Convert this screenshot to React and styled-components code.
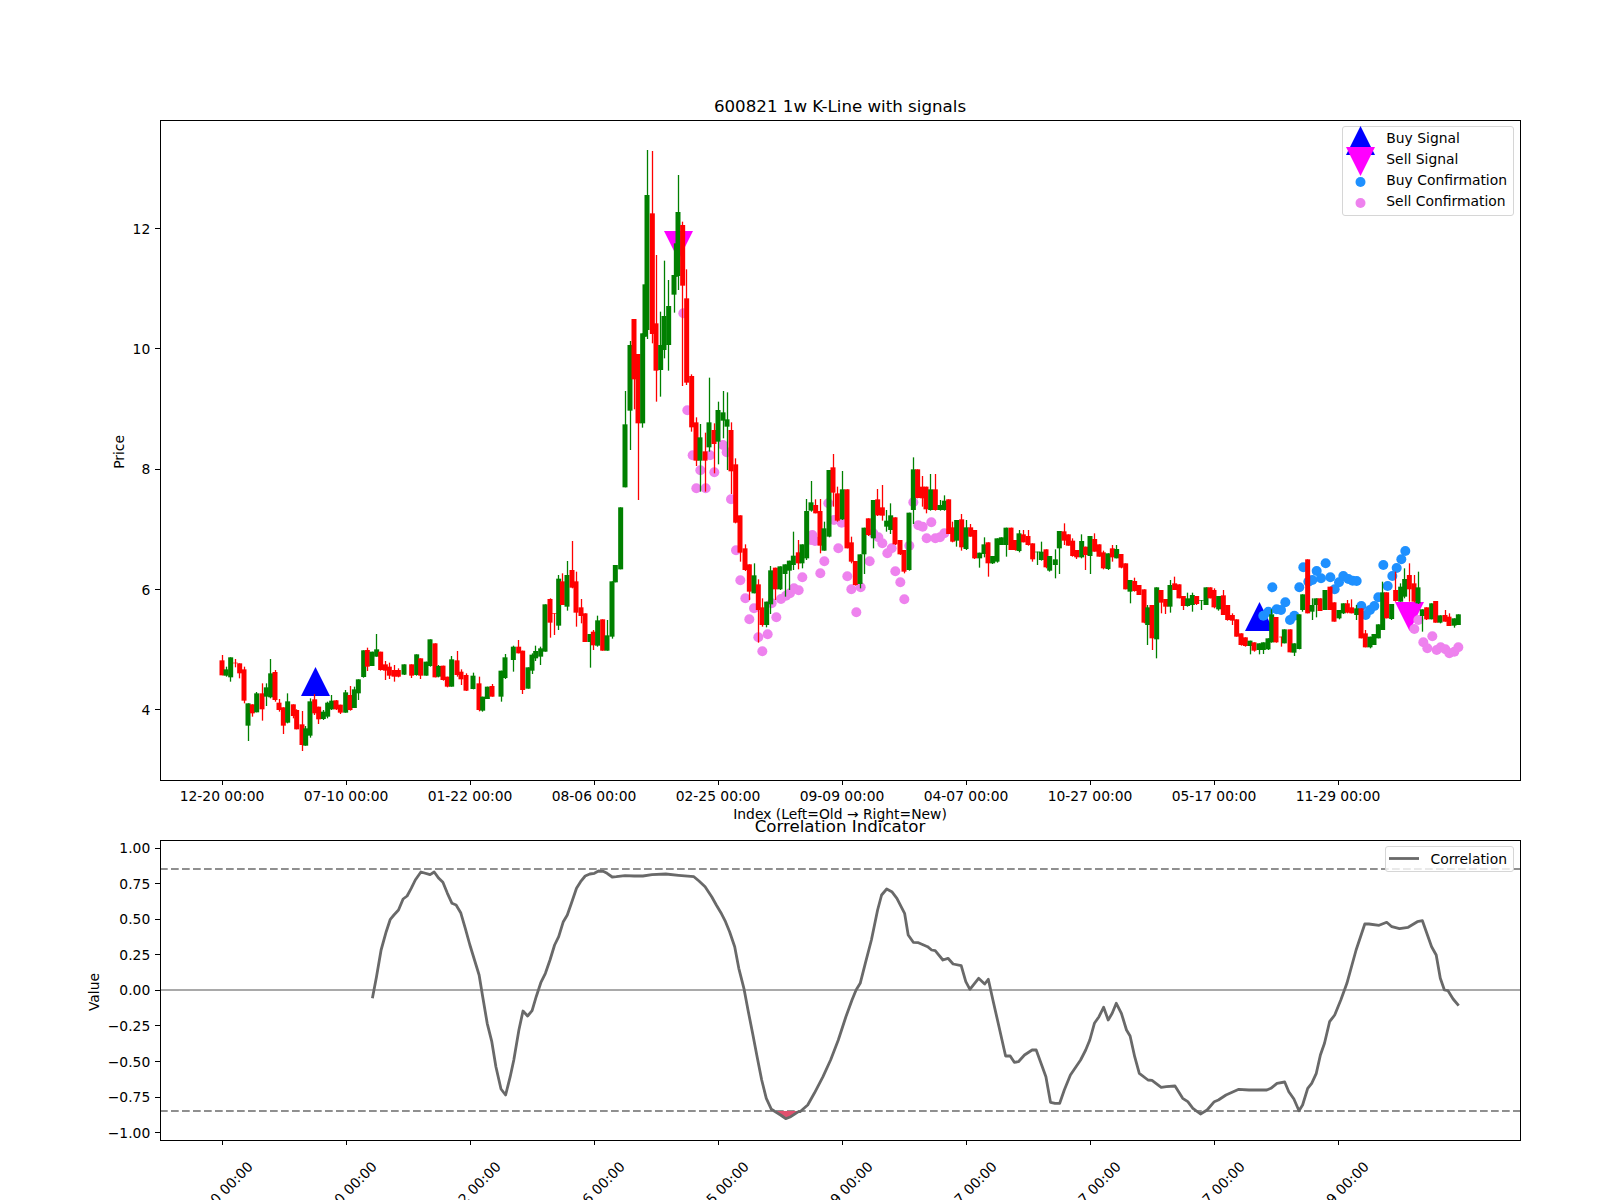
import React from 'react';
import styled, { createGlobalStyle } from 'styled-components';

const GlobalStyle = createGlobalStyle`
  html, body {
    margin: 0;
    padding: 0;
    background: #fff;
  }
`;

const Figure = styled('div')`
  width: 1600px;
  height: 1200px;
  padding-top: 94px;
  box-sizing: border-box;
  overflow: hidden;
  background: #fff;
  color: #000;
  font-family: 'DejaVu Sans', sans-serif;
  font-size: 13.89px;
`;

const Title = styled('div')`
  height: 26px;
  margin-left: 160px;
  width: 1360px;
  font-size: 16.67px;
  line-height: 26px;
  text-align: center;
  white-space: nowrap;
`;

const AxesRow = styled('div')`
  display: flex;
  height: ${(p) => p.$height}px;
`;

const Gutter = styled('div')`
  width: 160px;
  flex: none;
  display: flex;
  justify-content: flex-end;
`;

const YLabel = styled('div')`
  align-self: center;
  writing-mode: vertical-rl;
  transform: rotate(180deg);
  line-height: 16px;
  margin-top: 4px;
  margin-right: 6px;
`;

const YTicks = styled('div')`
  display: flex;
  flex-direction: column;
  margin-top: ${(p) => p.$offset}px;
`;

const YTick = styled('div')`
  flex: none;
  height: ${(p) => p.$step}px;
  display: flex;
  align-items: center;
  justify-content: flex-end;
  line-height: 14px;

  &::after {
    content: '';
    width: 4.9px;
    height: 1px;
    margin-left: 4.9px;
    background: #000;
  }
`;

const Plot = styled('div')`
  position: relative;
  width: 1361px;
  height: calc(100% + 1px);
  outline: 1px solid #000;
  outline-offset: -1px;
`;

const ChartSvg = styled('svg')`
  display: block;
  width: 1360px;
  height: calc(100% - 1px);
`;

const Legend = styled('div')`
  position: absolute;
  top: 6px;
  right: 7px;
  padding: ${(p) => p.$padding};
  border: 1px solid #d6d6d6;
  border-radius: 3px;
  background: rgba(255, 255, 255, 0.8);
`;

const LegendRow = styled('div')`
  display: flex;
  align-items: center;
  height: 21px;
  gap: 11px;
  white-space: nowrap;
`;

const LegendMarker = styled('svg')`
  flex: none;
  overflow: visible;
`;

const AxesFooter = styled('div')`
  height: ${(p) => p.$height}px;
  margin-left: 160px;
`;

const XTicks = styled('div')`
  display: flex;
`;

const XTick = styled('div')`
  flex: none;
  width: 124px;
  display: flex;
  flex-direction: column;
  align-items: center;

  &::before {
    content: '';
    width: 1px;
    height: 4.9px;
    background: #000;
  }
`;

const TickLabel = styled('span')`
  margin-top: 4px;
  line-height: 14px;
  white-space: nowrap;
`;

const SlantedLabel = styled(TickLabel)`
  margin-top: 42px;
  margin-left: -3px;
  transform: rotate(-45deg);
`;

const XLabel = styled('div')`
  width: 1360px;
  margin-top: 3px;
  line-height: 16px;
  text-align: center;
  white-space: nowrap;
`;

// rows were read off the chart: [x, bodyTop, bodyBottom, wickTop, wickBottom, colour]
const toCandles = (ox, oy, rows) =>
  rows.map(([x, top, bottom, high, low, c]) => ({
    x: ox + x / 3,
    top: oy + top / 3,
    bottom: oy + bottom / 3,
    high: oy + high / 3,
    low: oy + low / 3,
    color: c === 'r' ? '#ff0000' : '#008000'
  }));

const candles = [
  ...toCandles(150, 480, [
    [216, 541, 586, 525, 586, 'r'], [228, 568, 587, 560, 590, 'g'], [242, 532, 592, 532, 605, 'g'],
    [256, 548, 550, 537, 562, 'r'], [269, 550, 580, 550, 595, 'r'], [282, 568, 662, 560, 670, 'r'],
    [294, 670, 737, 670, 783, 'g'], [307, 673, 700, 673, 710, 'r'], [320, 640, 697, 636, 697, 'g'],
    [336, 640, 688, 610, 722, 'r'], [349, 622, 650, 610, 678, 'g'], [362, 580, 652, 537, 655, 'g'],
    [375, 576, 660, 570, 665, 'r'], [387, 668, 690, 657, 695, 'r'], [400, 682, 737, 682, 762, 'r'],
    [413, 664, 728, 640, 730, 'g'], [430, 673, 708, 673, 715, 'r'], [440, 690, 748, 688, 748, 'r'],
    [456, 733, 795, 693, 813, 'r'], [467, 745, 797, 738, 797, 'g'], [480, 664, 767, 655, 773, 'g'],
    [494, 658, 700, 642, 705, 'r'], [506, 680, 718, 680, 732, 'r'], [520, 695, 717, 690, 720, 'g'],
    [533, 668, 710, 665, 715, 'g'], [545, 662, 688, 645, 690, 'g'], [558, 661, 688, 660, 690, 'r'],
    [571, 674, 698, 674, 702, 'r'], [587, 637, 698, 630, 698, 'g'], [600, 645, 690, 618, 692, 'r'],
    [613, 628, 684, 620, 684, 'g'], [625, 598, 640, 598, 660, 'g'], [641, 511, 591, 511, 593, 'g'],
    [652, 510, 560, 503, 573, 'r'], [666, 515, 558, 515, 558, 'g'], [680, 508, 530, 462, 530, 'g'],
    [692, 515, 570, 515, 572, 'r'], [706, 553, 572, 543, 600, 'r'], [718, 560, 587, 548, 597, 'r'],
    [732, 570, 590, 555, 605, 'r'], [745, 570, 590, 565, 592, 'r'], [762, 553, 584, 553, 585, 'g'],
    [785, 553, 587, 553, 594, 'r'], [800, 523, 585, 523, 587, 'g'], [812, 535, 587, 535, 597, 'r'],
    [828, 545, 587, 545, 587, 'g'], [840, 478, 558, 478, 560, 'g'], [855, 490, 592, 490, 592, 'r'],
    [866, 558, 590, 555, 592, 'g'], [879, 557, 600, 557, 602, 'r'], [892, 590, 620, 590, 622, 'r'],
    [905, 538, 620, 528, 620, 'g'], [921, 541, 585, 513, 590, 'r'], [933, 575, 598, 568, 615, 'r'],
    [948, 585, 632, 580, 633, 'r'], [969, 587, 627, 578, 628, 'g'], [987, 610, 690, 590, 694, 'r'],
    [998, 650, 692, 650, 695, 'g'], [1012, 620, 657, 620, 657, 'g'], [1026, 618, 650, 612, 650, 'r'],
    [1053, 572, 650, 572, 665, 'g'], [1065, 532, 594, 522, 597, 'g'], [1090, 500, 540, 497, 575, 'g'],
    [1106, 500, 520, 480, 520, 'r'], [1118, 512, 630, 512, 642, 'r'], [1134, 562, 626, 562, 626, 'g'],
    [1146, 524, 572, 520, 582, 'g'], [1157, 513, 535, 497, 543, 'g'], [1172, 505, 530, 500, 555, 'g'],
    [1185, 373, 515, 373, 515, 'g'], [1200, 357, 428, 355, 473, 'r'], [1213, 400, 402, 400, 465, 'r'],
    [1226, 296, 437, 285, 450, 'g'], [1237, 304, 375, 280, 375, 'r'], [1251, 285, 380, 243, 392, 'g'],
    [1266, 270, 323, 183, 325, 'r'], [1278, 304, 398, 275, 440, 'r'], [1293, 382, 408, 357, 430, 'r'],
    [1305, 400, 486, 400, 486, 'r'], [1320, 462, 486, 462, 563, 'g'], [1330, 455, 496, 450, 510, 'r'],
    [1343, 421, 497, 407, 500, 'g'], [1358, 418, 512, 418, 512, 'r'], [1371, 466, 512, 420, 512, 'g'],
    [1386, 304, 470, 304, 476, 'g'], [1396, 255, 307, 255, 307, 'g'], [1412, 82, 268, 82, 268, 'g']
  ]),
  ...toCandles(600, 130, [
    [75, 883, 1072, 783, 1072, 'g'], [90, 645, 842, 633, 960, 'g'], [102, 567, 748, 567, 838, 'r'],
    [114, 672, 880, 672, 1110, 'r'], [128, 610, 880, 610, 893, 'g'], [135, 463, 620, 463, 620, 'g'],
    [141, 195, 600, 60, 627, 'g'], [157, 250, 612, 63, 640, 'r'], [168, 580, 722, 375, 815, 'r'],
    [182, 645, 720, 545, 800, 'g'], [192, 558, 660, 392, 685, 'g'], [206, 528, 645, 450, 722, 'g'],
    [222, 435, 494, 435, 548, 'g'], [229, 340, 440, 340, 440, 'g'], [234, 246, 438, 135, 480, 'g'],
    [248, 285, 467, 275, 768, 'r'], [260, 505, 758, 418, 765, 'r'], [275, 738, 892, 733, 905, 'r'],
    [288, 877, 992, 862, 1008, 'r'], [300, 922, 992, 882, 1085, 'g'], [315, 964, 992, 908, 1085, 'r'],
    [327, 877, 952, 743, 965, 'g'], [342, 900, 942, 880, 1030, 'r'], [354, 840, 935, 815, 1003, 'g'],
    [369, 847, 872, 783, 925, 'g'], [381, 868, 890, 787, 1020, 'g'], [393, 900, 1024, 877, 1092, 'r'],
    [407, 1003, 1178, 985, 1180, 'r']
  ]),
  ...toCandles(700, 430, [
    [120, 256, 368, 256, 395, 'r'], [135, 355, 420, 343, 423, 'r'], [148, 403, 485, 403, 510, 'r'],
    [162, 436, 490, 400, 490, 'g'], [175, 463, 540, 448, 638, 'r'], [186, 532, 585, 505, 590, 'r'],
    [200, 515, 585, 515, 592, 'g'], [212, 421, 523, 408, 552, 'g'], [226, 413, 478, 413, 510, 'r'],
    [240, 409, 478, 409, 480, 'g'], [255, 403, 432, 403, 500, 'g'], [268, 392, 422, 392, 480, 'g'],
    [280, 377, 405, 305, 420, 'g'], [295, 367, 400, 330, 418, 'r'], [306, 343, 400, 343, 415, 'g'],
    [320, 243, 385, 207, 390, 'g'], [333, 217, 242, 153, 245, 'g'], [347, 225, 250, 208, 250, 'r'],
    [360, 243, 347, 207, 370, 'r'], [372, 295, 362, 275, 362, 'g'], [387, 120, 320, 120, 322, 'g'],
    [399, 112, 188, 72, 230, 'r'], [412, 190, 272, 170, 275, 'r'], [427, 178, 268, 123, 270, 'g'],
    [441, 178, 355, 178, 355, 'r'], [454, 337, 395, 320, 400, 'r'], [466, 393, 465, 393, 467, 'r'],
    [480, 373, 462, 373, 475, 'g'], [492, 293, 373, 293, 432, 'g'], [505, 265, 315, 265, 318, 'r'],
    [520, 210, 325, 210, 355, 'g'], [533, 208, 256, 177, 258, 'r'], [547, 232, 257, 165, 272, 'r'],
    [560, 272, 290, 240, 305, 'g'], [572, 256, 300, 220, 312, 'g'], [585, 262, 343, 262, 345, 'r'],
    [600, 330, 373, 330, 375, 'r'], [612, 360, 425, 360, 430, 'r'], [627, 248, 420, 248, 422, 'g'],
    [640, 118, 240, 82, 282, 'g'], [653, 118, 204, 118, 205, 'r'], [667, 170, 205, 138, 230, 'r'],
    [678, 170, 238, 170, 250, 'r'], [692, 178, 240, 132, 242, 'g'], [706, 178, 240, 132, 242, 'r'],
    [720, 225, 240, 210, 242, 'g'], [733, 212, 240, 196, 242, 'g'], [746, 208, 312, 208, 312, 'r'],
    [758, 292, 335, 275, 337, 'r'], [770, 270, 332, 270, 350, 'g'], [785, 268, 352, 252, 362, 'r'],
    [798, 292, 357, 270, 360, 'g'], [812, 292, 320, 282, 320, 'r'], [824, 300, 385, 300, 387, 'r'],
    [839, 368, 385, 368, 413, 'g'], [852, 343, 372, 322, 382, 'g'], [864, 337, 400, 337, 440, 'r'],
    [878, 378, 400, 378, 402, 'g'], [891, 325, 395, 325, 398, 'g'], [904, 322, 345, 322, 345, 'g'],
    [918, 293, 345, 293, 380, 'g'], [933, 293, 360, 293, 360, 'r'], [945, 330, 360, 330, 362, 'r'],
    [957, 310, 363, 300, 367, 'g'], [970, 313, 337, 300, 337, 'r'], [984, 318, 345, 300, 347, 'r'],
    [998, 340, 388, 340, 395, 'r'], [1012, 365, 367, 365, 405, 'g'], [1024, 365, 390, 335, 392, 'g'],
    [1038, 358, 412, 358, 415, 'r'], [1049, 378, 422, 378, 425, 'g'], [1066, 388, 405, 358, 445, 'g'],
    [1078, 303, 355, 303, 432, 'g'], [1092, 304, 332, 280, 345, 'r'], [1105, 313, 347, 313, 347, 'r'],
    [1118, 332, 378, 325, 380, 'r'], [1130, 360, 382, 360, 387, 'r'], [1145, 333, 382, 313, 385, 'g'],
    [1157, 350, 375, 350, 420, 'r'], [1170, 318, 378, 318, 432, 'g'], [1184, 327, 365, 310, 365, 'r'],
    [1197, 343, 380, 343, 380, 'r'], [1210, 367, 415, 362, 418, 'r'], [1224, 370, 417, 370, 420, 'g'],
    [1237, 355, 382, 345, 395, 'r'], [1250, 357, 385, 345, 385, 'g'], [1263, 372, 413, 372, 415, 'r'],
    [1277, 400, 478, 400, 478, 'r']
  ]),
  ...toCandles(1130, 530, [
    [0, 150, 185, 150, 220, 'g'], [14, 153, 183, 143, 185, 'r'], [27, 165, 195, 165, 195, 'r'],
    [42, 178, 278, 178, 280, 'r'], [53, 232, 285, 225, 345, 'g'], [66, 225, 325, 225, 360, 'r'],
    [80, 172, 328, 172, 385, 'g'], [93, 180, 218, 180, 250, 'r'], [107, 207, 230, 207, 252, 'r'],
    [120, 165, 230, 150, 248, 'g'], [134, 160, 180, 140, 180, 'r'], [147, 163, 205, 163, 205, 'r'],
    [160, 198, 228, 198, 240, 'r'], [173, 205, 228, 188, 230, 'g'], [187, 195, 225, 188, 245, 'g'],
    [200, 198, 222, 198, 225, 'r'], [214, 210, 212, 210, 240, 'g'], [228, 172, 225, 172, 225, 'g'],
    [240, 172, 205, 172, 205, 'r'], [252, 180, 232, 175, 235, 'r'], [266, 198, 238, 198, 242, 'g'],
    [280, 196, 255, 180, 255, 'r'], [293, 225, 270, 225, 272, 'r'], [307, 255, 272, 250, 285, 'r'],
    [320, 268, 320, 268, 320, 'r'], [333, 310, 345, 310, 347, 'r'], [346, 322, 348, 322, 350, 'r'],
    [360, 332, 348, 332, 373, 'g'], [372, 337, 362, 337, 365, 'r'], [387, 340, 360, 340, 373, 'g'],
    [400, 337, 360, 337, 372, 'g'], [414, 325, 358, 325, 360, 'g'], [425, 253, 337, 238, 338, 'g'],
    [438, 261, 337, 261, 338, 'r'], [455, 320, 322, 320, 350, 'r'], [463, 298, 340, 298, 340, 'g'],
    [480, 298, 367, 298, 367, 'r'], [492, 340, 368, 340, 378, 'g'], [507, 253, 357, 253, 358, 'g'],
    [518, 193, 240, 193, 245, 'g'], [533, 88, 250, 88, 250, 'r'], [546, 225, 245, 205, 270, 'g'],
    [558, 205, 225, 205, 262, 'g'], [570, 205, 243, 205, 243, 'r'], [585, 180, 240, 180, 240, 'g'],
    [600, 170, 240, 170, 240, 'r'], [612, 217, 275, 217, 275, 'r'], [627, 240, 265, 240, 268, 'g'],
    [640, 220, 250, 220, 252, 'g'], [652, 220, 248, 210, 250, 'r'], [665, 232, 250, 208, 250, 'r'],
    [680, 235, 255, 225, 270, 'g'], [693, 235, 325, 235, 325, 'r'], [706, 310, 352, 300, 352, 'r'],
    [720, 320, 352, 320, 355, 'g'], [732, 312, 345, 312, 345, 'g'], [745, 283, 325, 283, 325, 'g'],
    [758, 187, 300, 155, 300, 'g'], [770, 187, 265, 187, 265, 'r'], [785, 222, 267, 222, 270, 'g'],
    [797, 180, 213, 125, 215, 'r'], [812, 170, 215, 160, 215, 'g'], [824, 147, 200, 115, 205, 'g'],
    [838, 135, 178, 100, 215, 'r'], [852, 160, 215, 135, 217, 'r'], [864, 172, 220, 125, 222, 'g'],
    [877, 238, 258, 238, 305, 'g'], [890, 232, 268, 232, 270, 'r'], [905, 220, 268, 220, 268, 'g'],
    [917, 213, 278, 213, 278, 'r'], [930, 256, 278, 256, 280, 'g'], [945, 255, 275, 240, 275, 'r'],
    [957, 260, 288, 250, 288, 'r'], [972, 265, 287, 265, 293, 'g'], [985, 253, 285, 253, 285, 'g']
  ])
];

const toDots = (ox, oy, rows) => rows.map(([x, y]) => [ox + x / 3, oy + y / 3]);

const sellDots = [
  ...toDots(600, 130, [
    [250, 550], [262, 841], [278, 976], [301, 1021], [289, 1075], [317, 1075], [343, 1027],
    [330, 976], [369, 945], [380, 967], [393, 1108]
  ]),
  ...toDots(700, 430, [
    [108, 361], [121, 451], [136, 505], [162, 535], [148, 568], [175, 622], [203, 613], [187, 664],
    [229, 562], [215, 520], [243, 507], [258, 497], [270, 490], [282, 475], [296, 481], [307, 442],
    [361, 430], [373, 394], [337, 315], [333, 330], [345, 333], [402, 270], [425, 278], [385, 220],
    [415, 355], [442, 439], [454, 478], [482, 472], [469, 547], [509, 394], [520, 310], [535, 322],
    [547, 340], [575, 355], [562, 370], [586, 424], [601, 457], [613, 508], [628, 347], [640, 217],
    [655, 286], [668, 290], [694, 277], [680, 325], [706, 325], [720, 322], [733, 310]
  ]),
  ...toDots(1130, 530, [
    [865, 270], [853, 297], [907, 319], [880, 337], [892, 355], [920, 360], [932, 352], [946, 358],
    [958, 370], [973, 365], [985, 352]
  ])
];

const buyDots = toDots(1130, 530, [
  [427, 172], [400, 257], [415, 245], [440, 238], [453, 240], [466, 217], [480, 270], [493, 257],
  [508, 172], [520, 112], [535, 155], [547, 150], [560, 123], [573, 145], [587, 100], [601, 142],
  [614, 178], [627, 157], [640, 138], [655, 147], [668, 152], [680, 153], [694, 228], [707, 255],
  [720, 240], [733, 228], [745, 202], [760, 105], [773, 168], [787, 138], [800, 114], [814, 88],
  [826, 63]
]);

const correlationLeft = [
  [730, 595], [738, 530], [747, 450], [757, 395], [765, 358], [772, 345], [781, 330], [790, 297],
  [798, 288], [806, 265], [814, 240], [825, 216], [843, 224], [851, 216], [860, 235], [868, 247],
  [877, 280], [886, 310], [894, 315], [903, 338], [912, 385], [921, 435], [930, 480], [939, 525],
  [946, 590], [955, 670], [964, 725], [972, 800], [982, 867], [991, 885], [1000, 830], [1007, 780],
  [1017, 690], [1025, 633], [1034, 648], [1043, 632], [1051, 590], [1060, 548], [1069, 520],
  [1078, 480], [1087, 435], [1095, 410], [1104, 365], [1112, 345], [1120, 310], [1130, 265],
  [1138, 245], [1147, 228], [1156, 222], [1165, 220], [1173, 213], [1182, 214], [1190, 220],
  [1200, 231], [1208, 230], [1225, 227], [1243, 228], [1260, 228], [1278, 224], [1305, 222],
  [1330, 226], [1360, 230], [1370, 243], [1382, 260], [1395, 290], [1404, 315], [1413, 338],
  [1422, 365], [1430, 395], [1440, 440], [1448, 505], [1458, 565], [1466, 630], [1475, 700],
  [1484, 770], [1493, 840], [1502, 895], [1512, 928], [1530, 945], [1540, 956], [1550, 950],
  [1565, 935]
];

const correlationRight = [
  [0, 935], [15, 915], [28, 880], [45, 830], [60, 780], [75, 720], [90, 650], [102, 600], [110, 570],
  [118, 550], [128, 490], [140, 420], [152, 330], [160, 285], [170, 267], [180, 275], [190, 295],
  [205, 340], [212, 405], [222, 427], [232, 428], [250, 440], [258, 450], [265, 452], [280, 480],
  [290, 475], [300, 492], [316, 497], [325, 545], [333, 568], [350, 535], [362, 552], [369, 538],
  [378, 600], [390, 680], [403, 768], [412, 768], [420, 787], [428, 785], [440, 765], [455, 750],
  [463, 750], [475, 800], [482, 830], [491, 907], [500, 910], [509, 910], [518, 870], [530, 825],
  [550, 780], [560, 750], [568, 720], [577, 670], [586, 650], [595, 622], [604, 660], [612, 640],
  [620, 610], [630, 640], [640, 690], [647, 708], [656, 770], [665, 820], [682, 840], [690, 841],
  [708, 862], [718, 860], [735, 858], [750, 895], [760, 905], [770, 925], [785, 942], [798, 930],
  [812, 905], [820, 900], [835, 885], [860, 868], [880, 870], [915, 870], [923, 865], [935, 850],
  [950, 846], [958, 875], [968, 897], [978, 932], [985, 915], [995, 865], [1003, 850], [1012, 820],
  [1020, 765], [1028, 730], [1038, 665], [1048, 645], [1060, 600], [1072, 550], [1090, 450],
  [1107, 372], [1115, 372], [1135, 376], [1150, 367], [1160, 380], [1175, 386], [1192, 382],
  [1210, 365], [1220, 362], [1238, 440], [1247, 465], [1255, 535], [1263, 570], [1270, 572],
  [1280, 597], [1291, 617]
];

const correlationPath = [
  ...correlationLeft.map(([x, y]) => [x / 1.96, 800 + y / 3]),
  ...correlationRight.map(([x, y]) => [800 + x / 1.96, 800 + y / 3])
]
  .map(([x, y]) => `${x.toFixed(1)},${y.toFixed(1)}`)
  .join(' ');

const tickDates = [
  '12-20 00:00', '07-10 00:00', '01-22 00:00', '08-06 00:00', '02-25 00:00',
  '09-09 00:00', '04-07 00:00', '10-27 00:00', '05-17 00:00', '11-29 00:00'
];

const priceTicks = ['12', '10', '8', '6', '4'];
const valueTicks = ['1.00', '0.75', '0.50', '0.25', '0.00', '−0.25', '−0.50', '−0.75', '−1.00'];

const triangleUp = (x, top) => `${x},${top} ${x - 14.5},${top + 29} ${x + 14.5},${top + 29}`;
const triangleDown = (x, top) => `${x - 14.5},${top} ${x + 14.5},${top} ${x},${top + 29}`;

const Candle = ({ c }) => {
  const wickX = Math.floor(c.x) + 0.5;
  return (
    <g>
      <line x1={wickX} x2={wickX} y1={c.high} y2={c.low} stroke={c.color} strokeWidth="1.3" />
      <rect x={c.x - 2.5} y={c.top} width="5" height={c.bottom - c.top} fill={c.color} />
    </g>
  );
};

const PriceChart = () => (
  <ChartSvg viewBox="160 120 1360 660">
    <polygon points={triangleUp(315.5, 667)} fill="#0000ff" />
    <polygon points={triangleUp(1259.5, 602)} fill="#0000ff" />
    <polygon points={triangleDown(678.5, 231)} fill="#ff00ff" />
    <polygon points={triangleDown(1409.5, 602)} fill="#ff00ff" />
    {sellDots.map(([x, y], i) => (
      <circle key={i} cx={x} cy={y} r="5" fill="#ee82ee" />
    ))}
    {buyDots.map(([x, y], i) => (
      <circle key={i} cx={x} cy={y} r="5" fill="#1e90ff" />
    ))}
    {candles.map((c, i) => (
      <Candle key={i} c={c} />
    ))}
  </ChartSvg>
);

const CorrelationChart = () => (
  <ChartSvg viewBox="160 840 1360 300">
    <line x1="160" x2="1520" y1="990" y2="990" stroke="#a9a9a9" strokeWidth="2" />
    <line x1="160" x2="1520" y1="869" y2="869" stroke="#8f8f8f" strokeWidth="2" strokeDasharray="7.7 3.3" />
    <line x1="160" x2="1520" y1="1111" y2="1111" stroke="#8f8f8f" strokeWidth="2" strokeDasharray="7.7 3.3" />
    <polygon points="773,1111 780,1115 785.7,1118.7 791.4,1116.7 798,1112 800,1111" fill="#e0506e" />
    <polyline points={correlationPath} fill="none" stroke="#696969" strokeWidth="2.8" strokeLinejoin="round" />
  </ChartSvg>
);

const PriceLegend = () => (
  <Legend $padding="0 6px 4px 3px">
    <LegendRow>
      <LegendMarker width="29" height="21" viewBox="-14.5 -10.5 29 21">
        <polygon points={triangleUp(0, -11.5)} fill="#0000ff" />
      </LegendMarker>
      Buy Signal
    </LegendRow>
    <LegendRow>
      <LegendMarker width="29" height="21" viewBox="-14.5 -10.5 29 21">
        <polygon points={triangleDown(0, -11.5)} fill="#ff00ff" />
      </LegendMarker>
      Sell Signal
    </LegendRow>
    <LegendRow>
      <LegendMarker width="29" height="21" viewBox="-14.5 -10.5 29 21">
        <circle cx="0" cy="2.5" r="5" fill="#1e90ff" />
      </LegendMarker>
      Buy Confirmation
    </LegendRow>
    <LegendRow>
      <LegendMarker width="29" height="21" viewBox="-14.5 -10.5 29 21">
        <circle cx="0" cy="2.5" r="5" fill="#ee82ee" />
      </LegendMarker>
      Sell Confirmation
    </LegendRow>
  </Legend>
);

const CorrelationLegend = () => (
  <Legend $padding="1px 6px 2px 3px">
    <LegendRow>
      <LegendMarker width="30" height="21" viewBox="0 0 30 21">
        <line x1="0" x2="30" y1="10.5" y2="10.5" stroke="#696969" strokeWidth="2.8" />
      </LegendMarker>
      Correlation
    </LegendRow>
  </Legend>
);

const App = () => (
  <Figure>
    <GlobalStyle />
    <Title>600821 1w K-Line with signals</Title>
    <AxesRow $height={660}>
      <Gutter>
        <YLabel>Price</YLabel>
        <YTicks $offset={48.4}>
          {priceTicks.map((t) => (
            <YTick key={t} $step={120.35}>{t}</YTick>
          ))}
        </YTicks>
      </Gutter>
      <Plot>
        <PriceChart />
        <PriceLegend />
      </Plot>
    </AxesRow>
    <AxesFooter $height={34}>
      <XTicks>
        {tickDates.map((d) => (
          <XTick key={d}>
            <TickLabel>{d}</TickLabel>
          </XTick>
        ))}
      </XTicks>
      <XLabel>Index (Left=Old → Right=New)</XLabel>
    </AxesFooter>
    <Title>Correlation Indicator</Title>
    <AxesRow $height={300}>
      <Gutter>
        <YLabel>Value</YLabel>
        <YTicks $offset={-9.8}>
          {valueTicks.map((t) => (
            <YTick key={t} $step={35.6}>{t}</YTick>
          ))}
        </YTicks>
      </Gutter>
      <Plot>
        <CorrelationChart />
        <CorrelationLegend />
      </Plot>
    </AxesRow>
    <AxesFooter $height={60}>
      <XTicks>
        {tickDates.map((d) => (
          <XTick key={d}>
            <SlantedLabel>{d}</SlantedLabel>
          </XTick>
        ))}
      </XTicks>
    </AxesFooter>
  </Figure>
);

export default App;
